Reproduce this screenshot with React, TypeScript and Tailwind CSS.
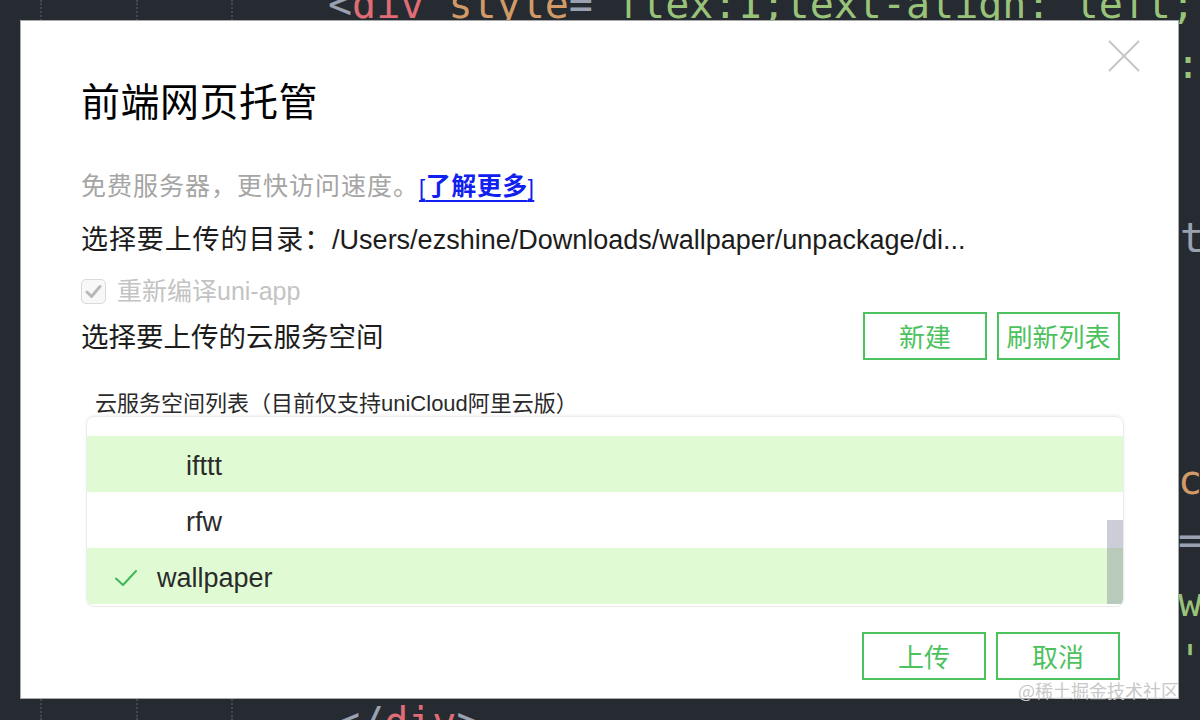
import React from "react";

const cjk = { fontFamily: "'Noto Sans CJK SC', sans-serif" };
const mixed = { fontFamily: "'Liberation Sans', 'Noto Sans CJK SC', sans-serif" };
const mono = { fontFamily: "'DejaVu Sans Mono', monospace" };

function GreenButton({ label, w }: { label: string; w: string }) {
  return (
    <div
      className={`${w} h-[48px] border-2 border-[#4cc25e] flex items-center justify-center text-[26px] text-[#4cc25e] leading-none`}
      style={cjk}
    >
      {label}
    </div>
  );
}

function Check() {
  return (
    <svg width="22" height="18" viewBox="0 0 22 18" fill="none">
      <polyline points="1,9.5 8,16 21,2" stroke="#3fb65a" strokeWidth="2" strokeLinecap="round" strokeLinejoin="round" />
    </svg>
  );
}

export default function App() {
  return (
    <div className="relative w-[1200px] h-[720px] bg-[#262a31] overflow-hidden">
      {/* background code */}
      <div className="absolute left-[40px] top-0 h-[720px] border-l-2 border-dotted border-[#434854]" />
      <div className="absolute left-[136px] top-0 h-[720px] border-l-2 border-dotted border-[#434854]" />
      <div className="absolute left-[231px] top-0 h-[720px] border-l-2 border-dotted border-[#434854]" />
      <div className="absolute left-[328px] top-[-20px] text-[40px] leading-[48px] whitespace-pre" style={mono}>
        <span className="text-[#9aa2b1]">&lt;</span>
        <span className="text-[#e06c75]">div</span>
        <span className="text-[#d19a66]"> style</span>
        <span className="text-[#9aa2b1]">=</span>
        <span className="text-[#98c379]">"flex:1;text-align: left;</span>
      </div>
      <div className="absolute left-[1176px] top-[40px] text-[40px] leading-[48px] text-[#98c379]" style={mono}>:</div>
      <div className="absolute left-[1180px] top-[214px] text-[40px] leading-[48px] text-[#9aa2b1]" style={mono}>t</div>
      <div className="absolute left-[1178px] top-[456px] text-[40px] leading-[48px] text-[#d19a66]" style={mono}>c</div>
      <div className="absolute left-[1178px] top-[516px] text-[40px] leading-[48px] text-[#9aa2b1]" style={mono}>=</div>
      <div className="absolute left-[1178px] top-[578px] text-[40px] leading-[48px] text-[#98c379]" style={mono}>w</div>
      <div className="absolute left-[1178px] top-[636px] text-[40px] leading-[48px] text-[#98c379]" style={mono}>'</div>
      <div className="absolute left-[336px] top-[698px] text-[40px] leading-[48px] whitespace-pre" style={mono}>
        <span className="text-[#9aa2b1]">&lt;/</span>
        <span className="text-[#e06c75]">div</span>
        <span className="text-[#9aa2b1]">&gt;</span>
      </div>

      {/* dialog */}
      <div className="absolute left-[20px] top-[20px] w-[1159px] h-[679px] bg-white border border-[#a9a9a9] pl-[60px] pr-[58px] pt-[53px] flex flex-col">
        <div className="absolute right-[38px] top-[19px] w-[32px] h-[32px]">
          <svg width="32" height="32" viewBox="0 0 32 32">
            <line x1="1" y1="1" x2="31" y2="31" stroke="#c6c6c6" strokeWidth="2" />
            <line x1="31" y1="1" x2="1" y2="31" stroke="#c6c6c6" strokeWidth="2" />
          </svg>
        </div>

        <div className="h-[50px] flex items-center text-[39px] text-black leading-none tracking-[0.5px]" style={cjk}>
          前端网页托管
        </div>

        <div className="mt-[42px] h-[40px] flex items-center text-[25px] leading-none" style={mixed}>
          <span className="text-[#a5a5a5] tracking-[1px]">免费服务器，更快访问速度。</span>
          <span className="text-[#1020ee] underline decoration-2 underline-offset-[5px] tracking-[0.5px]">
            <span className="text-[22px]">[</span>
            <span className="font-bold">了解更多</span>
            <span className="text-[22px]">]</span>
          </span>
        </div>

        <div className="mt-[14px] h-[40px] flex items-center text-[27px] text-[#1c1c1c] leading-none whitespace-nowrap" style={mixed}>
          <span className="tracking-[0.9px]">选择要上传的目录：</span>
          <span>/Users/ezshine/Downloads/wallpaper/unpackage/di...</span>
        </div>

        <div className="mt-[11px] h-[40px] flex items-center text-[25px] text-[#c3c3c3] leading-none" style={mixed}>
          <div className="w-[25px] h-[25px] rounded-[5px] border border-[#dadada] bg-[#f8f8f8] flex items-center justify-center">
            <svg width="17" height="15" viewBox="0 0 17 15" fill="none">
              <polyline points="2,8 6.5,12.5 15,2.5" stroke="#b9b9b9" strokeWidth="3" strokeLinecap="round" strokeLinejoin="round" />
            </svg>
          </div>
          <span className="ml-[11px]">重新编译uni-app</span>
        </div>

        <div className="mt-[1px] h-[48px] flex items-center justify-between">
          <div className="text-[27.5px] text-[#1c1c1c] leading-none" style={cjk}>选择要上传的云服务空间</div>
          <div className="flex gap-[10px]">
            <GreenButton label="新建" w="w-[124px]" />
            <GreenButton label="刷新列表" w="w-[123px]" />
          </div>
        </div>

        <div className="mt-[32px] h-[24px] pl-[14px] flex items-center text-[22px] text-[#2a2a2a] leading-none whitespace-nowrap" style={mixed}>
          云服务空间列表（目前仅支持uniCloud阿里云版）
        </div>

        <div className="relative ml-[5px] w-[1038px] h-[191px] shrink-0 rounded-[8px] border border-[#ececec] shadow-[0_-1px_3px_rgba(0,0,0,0.06)] overflow-hidden pt-[19px] text-[27px] text-[#2b2b2b]" style={mixed}>
          <div className="h-[56px] bg-[#e0fbd3] flex items-center pl-[99px] pt-[4px]">ifttt</div>
          <div className="h-[56px] bg-white flex items-center pl-[99px] pt-[4px]">rfw</div>
          <div className="h-[56px] bg-[#e0fbd3] flex items-center pl-[28px] pt-[3px]">
            <Check />
            <span className="ml-[20px] pt-[1px]">wallpaper</span>
          </div>
          <div className="absolute right-0 top-[103px] w-[16px] h-[84px] bg-[rgba(125,132,152,0.4)]" />
        </div>

        <div className="mt-[25px] h-[48px] flex justify-end gap-[10px]">
          <GreenButton label="上传" w="w-[124px]" />
          <GreenButton label="取消" w="w-[124px]" />
        </div>
      </div>

      <div className="absolute left-[1018px] top-[679px] text-[18px] leading-[22px] text-[#c8c8c8] whitespace-nowrap" style={cjk}>
        @稀土掘金技术社区
      </div>
    </div>
  );
}
